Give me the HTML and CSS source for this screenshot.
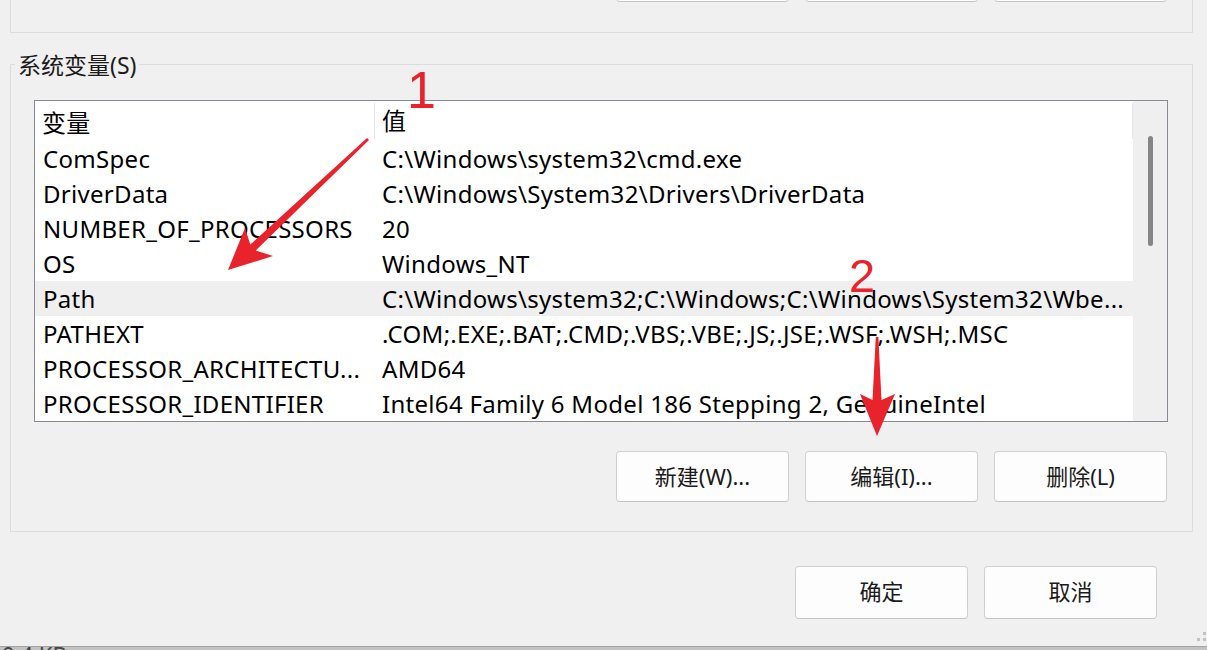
FILE: index.html
```html
<!DOCTYPE html>
<html lang="zh-CN">
<head>
<meta charset="utf-8">
<title>环境变量</title>
<link rel="stylesheet" href="styles.css">
</head>
<body>
<div class="page">
  <div class="top-group">
    <div class="btn-row top-row">
      <button class="btn" aria-label="新建"></button>
      <button class="btn" aria-label="编辑"></button>
      <button class="btn" aria-label="删除"></button>
    </div>
  </div>

  <section class="sys-group">
    <div class="legend">系统变量(S)</div>
    <div class="listbox">
      <div class="list">
        <div class="row head"><div class="c1">变量</div><div class="c2">值</div></div>
        <div class="row"><div class="c1">ComSpec</div><div class="c2">C:\Windows\system32\cmd.exe</div></div>
        <div class="row"><div class="c1">DriverData</div><div class="c2">C:\Windows\System32\Drivers\DriverData</div></div>
        <div class="row"><div class="c1">NUMBER_OF_PROCESSORS</div><div class="c2">20</div></div>
        <div class="row"><div class="c1">OS</div><div class="c2">Windows_NT</div></div>
        <div class="row selected"><div class="c1">Path</div><div class="c2">C:\Windows\system32;C:\Windows;C:\Windows\System32\Wbe...</div></div>
        <div class="row"><div class="c1">PATHEXT</div><div class="c2">.COM;.EXE;.BAT;.CMD;.VBS;.VBE;.JS;.JSE;.WSF;.WSH;.MSC</div></div>
        <div class="row"><div class="c1">PROCESSOR_ARCHITECTU...</div><div class="c2">AMD64</div></div>
        <div class="row"><div class="c1">PROCESSOR_IDENTIFIER</div><div class="c2">Intel64 Family 6 Model 186 Stepping 2, GenuineIntel</div></div>
      </div>
      <div class="scrollbar"><div class="thumb"></div></div>
    </div>
    <div class="btn-row group-row">
      <button class="btn">新建(W)...</button>
      <button class="btn">编辑(I)...</button>
      <button class="btn">删除(L)</button>
    </div>
  </section>

  <div class="btn-row dialog-row">
    <button class="btn">确定</button>
    <button class="btn">取消</button>
  </div>

  <div class="statusbar"><span class="status-text">0.4 KB</span></div>
</div>

<svg class="annot" width="1207" height="650" viewBox="0 0 1207 650" aria-hidden="true">
  <text class="annot-num" x="407" y="108" font-size="52">1</text>
  <polygon class="annot-arrow" points="367,137.9 250.3,244.6 245,228 228,270 273,256 255.7,250.4 369,140.1"/>
  <text class="annot-num" x="849" y="292" font-size="47">2</text>
  <polygon class="annot-arrow" points="875.8,337 878.4,337 881.5,400 895,394 877,436 860,394 872.5,400"/>
</svg>

<div class="grip"><i class="g1"></i><i class="g2"></i><i class="g3"></i></div>
</body>
</html>
```

FILE: styles.css
```css
* { box-sizing: border-box; }

html, body {
  margin: 0;
  padding: 0;
  width: 1207px;
  height: 650px;
  overflow: hidden;
  background: #f0f0f0;
}

body {
  font-family: "Noto Sans", "Noto Sans CJK SC", sans-serif;
  color: #000;
  position: relative;
}

.page {
  width: 1207px;
  height: 650px;
  display: flex;
  flex-direction: column;
}

/* generic button */
.btn {
  width: 173px;
  height: 51px;
  background: #fdfdfd;
  border: 1px solid #d0d0d0;
  border-bottom-color: #c4c4c4;
  border-radius: 4px;
  font-family: "Noto Sans", "Noto Sans CJK SC", sans-serif;
  font-size: 22px;
  color: #1b1b1b;
  padding: 0 0 3px;
  margin: 0;
}

.btn-row {
  display: flex;
  justify-content: flex-end;
  gap: 16px;
}

/* upper (cut off) group box */
.top-group {
  margin-left: 10px;
  width: 1183px;
  height: 33px;
  border: 1px solid #dcdcdc;
  border-top: none;
  padding-right: 25px;
  flex: none;
}

.top-row {
  margin-top: -49px;
}

/* system variables group */
.sys-group {
  margin-top: 31px;
  margin-left: 10px;
  width: 1183px;
  height: 468px;
  border: 1px solid #dcdcdc;
  padding: 0 25px 0 23px;
  flex: none;
}

.legend {
  width: fit-content;
  height: 26px;
  line-height: 26px;
  margin-top: -13px;
  margin-left: -19px;
  padding: 0 3px;
  background: #f0f0f0;
  font-size: 23px;
  color: #1b1b1b;
}

.listbox {
  margin-top: 22px;
  width: 1134px;
  height: 322px;
  border: 1px solid #868a93;
  background: #fff;
  display: flex;
}

.list {
  width: 1098px;
  overflow: hidden;
}

.row {
  display: flex;
  height: 35px;
  line-height: 35px;
  font-size: 24px;
  letter-spacing: 0.3px;
  white-space: nowrap;
  color: #000;
}

.row .c1 {
  width: 339px;
  padding-left: 8px;
  overflow: hidden;
  flex: none;
}

.row .c2 {
  flex: 1;
  padding-left: 8px;
  overflow: hidden;
}

.row.head {
  height: 40px;
  line-height: 40px;
  padding-top: 2px;
}

.row.head .c1 { padding-left: 7px; }

.row.head .c2 {
  padding-left: 7px;
  border-left: 1px solid #e5e5e5;
  border-right: 1px solid #e5e5e5;
  margin-bottom: 2px;
  line-height: 36px;
}

.row.selected {
  background: #efefef;
}

.scrollbar {
  width: 34px;
  background: #efefef;
  display: flex;
  justify-content: center;
  padding-top: 35px;
}

.thumb {
  width: 5px;
  height: 110px;
  border-radius: 3px;
  background: #858585;
}

.group-row {
  margin-top: 29px;
}

.dialog-row {
  margin-top: 34px;
  padding-right: 50px;
}

.dialog-row .btn {
  height: 53px;
  padding-bottom: 6px;
}

.statusbar {
  margin-top: 27px;
  height: 4px;
  background: #c2c2c2;
  border-top: 1px solid #a3a3a3;
  overflow: hidden;
  flex: none;
}

.status-text {
  display: block;
  margin-top: -6px;
  padding-left: 2px;
  font-size: 22px;
  line-height: 26px;
  color: #444;
}

/* annotation overlay */
.annot {
  position: absolute;
  left: 0;
  top: 0;
  pointer-events: none;
}

.annot-num {
  font-family: "Liberation Sans", Arial, sans-serif;
  fill: #e8232b;
}

.annot-arrow {
  fill: #e8232b;
}

/* window resize grip */
.grip {
  position: absolute;
  right: 0;
  top: 632px;
  width: 10px;
  height: 10px;
}

.grip i {
  position: absolute;
  width: 3px;
  height: 3px;
  background: #c3c3c3;
}

.grip .g1 { left: 6px; top: 0; }
.grip .g2 { left: 0; top: 6px; }
.grip .g3 { left: 6px; top: 6px; }
```
